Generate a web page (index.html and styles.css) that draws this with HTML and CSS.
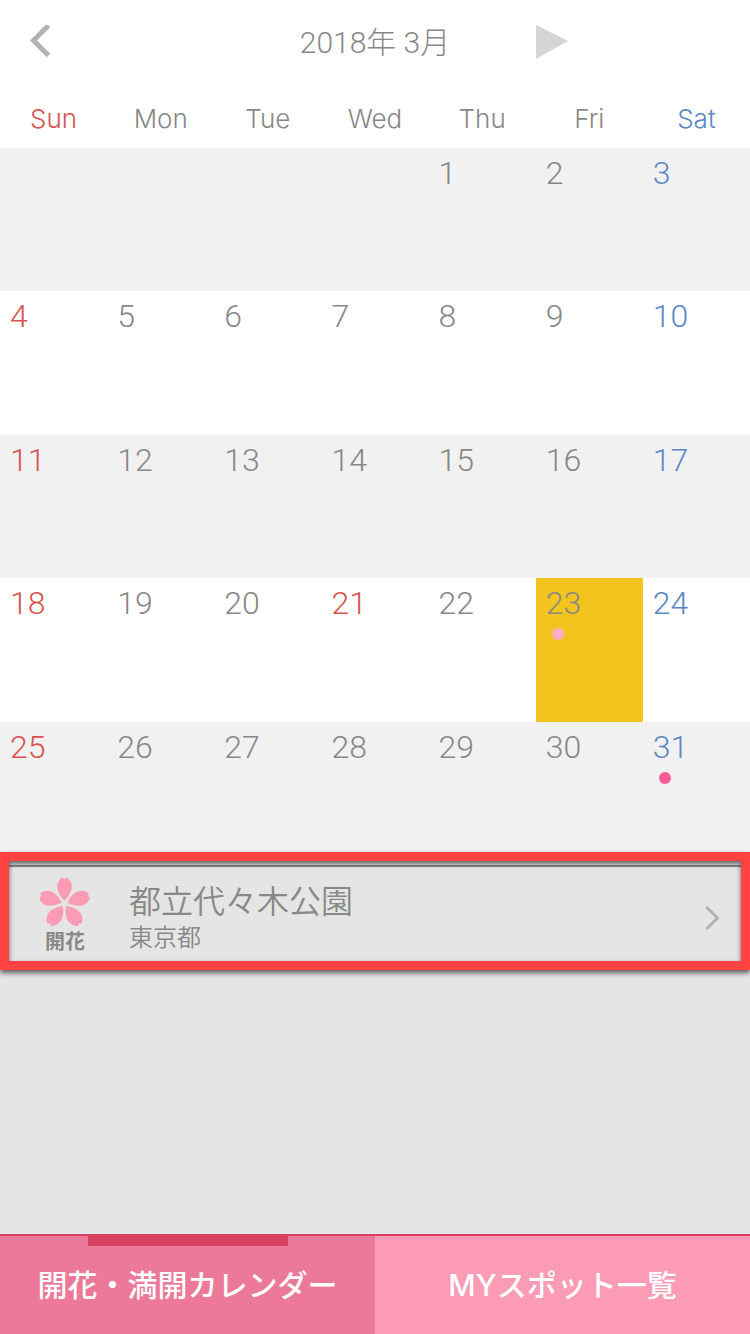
FILE: index.html
```html
<!DOCTYPE html>
<html lang="ja">
<head>
<meta charset="utf-8">
<meta name="viewport" content="width=device-width, initial-scale=1">
<title>開花・満開カレンダー</title>
<link rel="stylesheet" href="styles.css">
</head>
<body>
<header class="month-bar">
  <button class="month-prev" type="button" aria-label="前の月">
    <svg width="22" height="34" viewBox="0 0 22 34"><path d="M18.500 .5 3.500 15.500l15 15" fill="none" stroke="#b3b3b3" stroke-width="5"/></svg>
  </button>
  <h1 class="month-title">2018年 3月</h1>
  <button class="month-next" type="button" aria-label="次の月">
    <svg width="32" height="34" viewBox="0 0 32 34"><path d="M0 0 32 16 0 34z" fill="#d5d5d5"/></svg>
  </button>
</header>
<main class="content">
  <table class="calendar">
    <thead>
      <tr><th class="sun" scope="col">Sun</th><th scope="col">Mon</th><th scope="col">Tue</th><th scope="col">Wed</th><th scope="col">Thu</th><th scope="col">Fri</th><th class="sat" scope="col">Sat</th></tr>
    </thead>
    <tbody>
      <tr><td></td><td></td><td></td><td></td><td>1</td><td>2</td><td class="sat">3</td></tr>
      <tr><td class="sun">4</td><td>5</td><td>6</td><td>7</td><td>8</td><td>9</td><td class="sat">10</td></tr>
      <tr><td class="sun">11</td><td>12</td><td>13</td><td>14</td><td>15</td><td>16</td><td class="sat">17</td></tr>
      <tr><td class="sun">18</td><td>19</td><td>20</td><td class="sun">21</td><td>22</td><td class="selected">23<span class="dot dot-bloom"></span></td><td class="sat">24</td></tr>
      <tr><td class="sun">25</td><td>26</td><td>27</td><td>28</td><td>29</td><td>30</td><td class="sat">31<span class="dot dot-full"></span></td></tr>
    </tbody>
  </table>
  <ul class="spots">
    <li class="spot">
      <a class="spot-link" href="#spot">
        <span class="spot-status">
          <svg width="50" height="50" viewBox="0 0 50 50">
            <defs><path id="petal" d="M24.500 23.500C20.500 20 17.200 14.500 17.200 9.500 17.200 5.500 19.500 1.500 23 .2L24.500 2.600 26 .2C29.500 1.500 31.800 5.500 31.800 9.500 31.800 14.500 28.500 20 24.500 23.500z"/></defs>
            <g fill="#fb9bb6">
              <use href="#petal"/>
              <use href="#petal" transform="rotate(72 24.500 26.500)"/>
              <use href="#petal" transform="rotate(144 24.500 26.500)"/>
              <use href="#petal" transform="rotate(216 24.500 26.500)"/>
              <use href="#petal" transform="rotate(288 24.500 26.500)"/>
            </g>
          </svg>
          <span class="spot-label">開花</span>
        </span>
        <span class="spot-text">
          <span class="spot-name">都立代々木公園</span>
          <span class="spot-area">東京都</span>
        </span>
        <svg class="spot-arrow" width="15" height="24" viewBox="0 0 15 24"><path d="M1.500 1 12.500 12 1.500 23" fill="none" stroke="#b2b2b2" stroke-width="3"/></svg>
      </a>
    </li>
  </ul>
</main>
<nav class="tabs">
  <a class="tab tab-active" href="#calendar">開花・満開カレンダー</a>
  <a class="tab" href="#my-spots">MYスポット一覧</a>
</nav>
</body>
</html>
```
FILE: styles.css
```css
* {
  box-sizing: border-box;
}

body {
  display: flex;
  flex-direction: column;
  min-height: 100vh;
  margin: 0;
  background: #e5e5e5;
  color: #888;
  font-family: Inter, "Noto Sans CJK JP", sans-serif;
  font-weight: 350;
}

a {
  color: inherit;
  text-decoration: none;
}

svg {
  display: block;
}

.month-bar {
  display: grid;
  grid-template-columns: repeat(7, 1fr);
  align-items: center;
  height: 84px;
  background: #fff;
}

.month-prev,
.month-next {
  justify-self: start;
  padding: 0;
  border: 0;
  background: none;
}

.month-prev {
  padding-left: 30px;
}

.month-title {
  grid-column: 3 / 6;
  margin: 0;
  padding-top: 2px;
  font-family: Roboto, "Noto Sans CJK JP", sans-serif;
  font-size: 30px;
  font-weight: 300;
  line-height: 40px;
  text-align: center;
}

.content {
  flex: 1;
}

.calendar {
  width: 100%;
  table-layout: fixed;
  border-collapse: collapse;
  background: #fff;
}

.calendar th {
  height: 64px;
  padding: 6px 0 0;
  font-size: 26px;
  font-weight: 300;
  line-height: 40px;
}

.calendar td {
  height: 143px;
  padding: 5px 10px;
  font-family: Roboto, "Noto Sans CJK JP", sans-serif;
  font-size: 32px;
  line-height: 40px;
  font-weight: 300;
  vertical-align: top;
}

.calendar tbody tr:nth-child(odd) {
  background: #f1f1f1;
}

.calendar tbody tr:nth-child(even) td {
  height: 144px;
}

.calendar .sun {
  color: #d9534f;
}

.calendar .sat {
  color: #5b88c5;
}

.calendar .selected {
  background: #f3c41d;
}

.dot {
  display: block;
  width: 12px;
  height: 12px;
  margin: 5px 0 0 6px;
  border-radius: 50%;
}

.dot-bloom {
  background: #fbacc6;
}

.dot-full {
  background: #ff5c95;
}

.spots {
  margin: 0;
  padding: 0;
  list-style: none;
}

.spot {
  position: relative;
  border-top: 2px solid #8c8c8c;
}

/* highlight frame drawn over the row */
.spot::after {
  content: "";
  position: absolute;
  inset: -15px 0 -5px;
  border: 9px solid #ff4343;
  box-shadow: 0 3px 5px rgba(0, 0, 0, 0.6), inset 0 3px 5px rgba(0, 0, 0, 0.6);
  pointer-events: none;
}

.spot-link {
  display: flex;
  align-items: center;
  height: 98px;
  padding: 4px 30px 0 40px;
}

.spot-status {
  display: flex;
  flex-direction: column;
  align-items: center;
  width: 50px;
  height: 82px;
  margin-right: 39px;
}

.spot-label {
  font-size: 20px;
  font-weight: 700;
  line-height: 30px;
}

.spot-text {
  display: flex;
  flex: 1;
  flex-direction: column;
}

.spot-name {
  font-size: 32px;
  line-height: 40px;
}

.spot-area {
  font-size: 24px;
  line-height: 32px;
}

.tabs {
  display: flex;
  height: 100px;
  border-top: 2px solid #d8415f;
  color: #fff;
  font-size: 30px;
  font-weight: 500;
}

.tab {
  position: relative;
  display: flex;
  flex: 1;
  align-items: center;
  justify-content: center;
  padding-bottom: 4px;
  background: #fb9bb6;
}

.tab-active {
  background: #ed799a;
}

.tab-active::before {
  content: "";
  position: absolute;
  top: 0;
  width: 200px;
  height: 10px;
  background: #d8415f;
}
```
